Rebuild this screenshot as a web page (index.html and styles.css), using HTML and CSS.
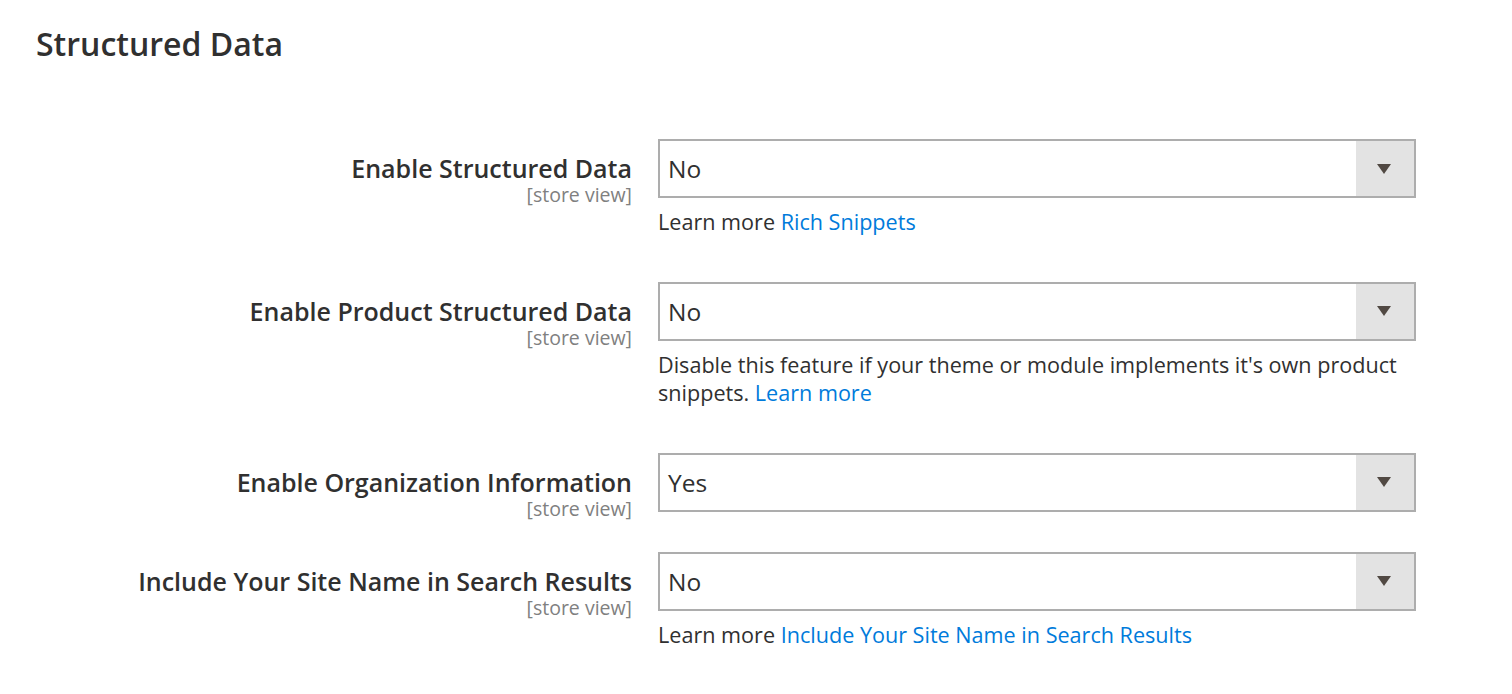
FILE: index.html
```html
<!DOCTYPE html>
<html>
<head>
<meta charset="utf-8">
<link rel="stylesheet" href="styles.css">
</head>
<body>
<div class="page">
  <h2 class="title">Structured Data</h2>
  <div class="fields">
    <div class="row">
      <div class="label"><span class="name">Enable Structured Data</span><span class="scope">[store view]</span></div>
      <div class="control">
        <div class="select"><span class="value">No</span><span class="btn"><span class="arrow"></span></span></div>
        <div class="note">Learn more <a class="link">Rich Snippets</a></div>
      </div>
    </div>
    <div class="row">
      <div class="label"><span class="name">Enable Product Structured Data</span><span class="scope">[store view]</span></div>
      <div class="control">
        <div class="select"><span class="value">No</span><span class="btn"><span class="arrow"></span></span></div>
        <div class="note">Disable this feature if your theme or module implements it's own product snippets. <a class="link">Learn more</a></div>
      </div>
    </div>
    <div class="row">
      <div class="label"><span class="name">Enable Organization Information</span><span class="scope">[store view]</span></div>
      <div class="control">
        <div class="select"><span class="value">Yes</span><span class="btn"><span class="arrow"></span></span></div>
      </div>
    </div>
    <div class="row">
      <div class="label"><span class="name">Include Your Site Name in Search Results</span><span class="scope">[store view]</span></div>
      <div class="control">
        <div class="select"><span class="value">No</span><span class="btn"><span class="arrow"></span></span></div>
        <div class="note">Learn more <a class="link">Include Your Site Name in Search Results</a></div>
      </div>
    </div>
  </div>
</div>
</body>
</html>
```
FILE: styles.css
```css
* { box-sizing: border-box; }
body {
  margin: 0;
  background: #ffffff;
  font-family: "Open Sans", "Noto Sans", sans-serif;
  color: #303030;
}
.page {
  padding: 17px 0 0 36px;
}
.title {
  margin: 0;
  font-size: 32px;
  font-weight: 600;
  line-height: 54px;
  color: #303030;
}
.fields {
  margin-top: 68px;
  display: flex;
  flex-direction: column;
}
.row {
  display: grid;
  grid-template-columns: 596px 758px;
  column-gap: 26px;
  margin-bottom: 28px;
}
.label {
  display: flex;
  flex-direction: column;
  align-items: flex-end;
  text-align: right;
  padding-top: 13px;
  padding-bottom: 5px;
}
.name {
  font-size: 25px;
  font-weight: 600;
  line-height: 32px;
  color: #303030;
}
.scope {
  font-size: 19.5px;
  line-height: 21px;
  color: #808080;
}
.select {
  height: 59px;
  border: 2px solid #adadad;
  display: flex;
  align-items: center;
  background: #fff;
}
.value {
  flex: 1;
  padding-left: 8px;
  font-size: 24.5px;
  color: #303030;
}
.btn {
  width: 58px;
  align-self: stretch;
  background: #e3e3e3;
  display: flex;
  align-items: center;
  justify-content: center;
}
.arrow {
  width: 0;
  height: 0;
  border-left: 7.5px solid transparent;
  border-right: 7.5px solid transparent;
  border-top: 10px solid #514943;
  margin-left: -2px;
}
.note {
  margin-top: 10px;
  margin-bottom: 17px;
  font-size: 21.6px;
  line-height: 28.5px;
  color: #303030;
}
.link {
  color: #007bdb;
  text-decoration: none;
}
```
